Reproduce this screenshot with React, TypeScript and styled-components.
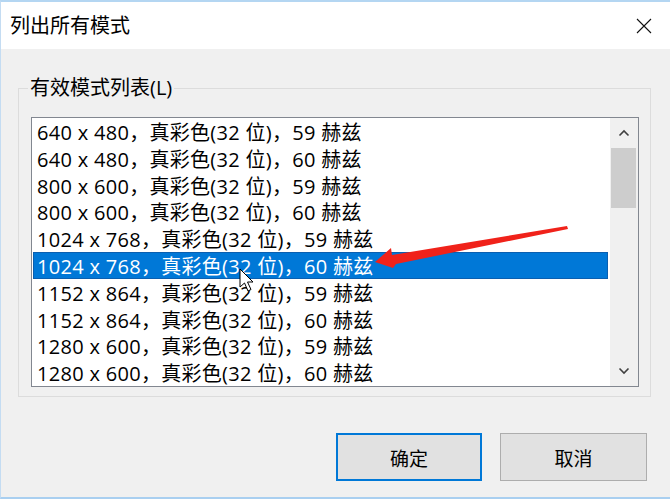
import React, { useState } from "react";
import styled, { createGlobalStyle } from "styled-components";

const GlobalStyle = createGlobalStyle`
  html, body {
    margin: 0;
    padding: 0;
    background: #f0f0f0;
  }
  body {
    font-family: "Open Sans", "Noto Sans CJK SC", sans-serif;
  }
`;

// 표시 모드 목록
const modes: string[] = [
  "640 x 480，真彩色(32 位)，59 赫兹",
  "640 x 480，真彩色(32 位)，60 赫兹",
  "800 x 600，真彩色(32 位)，59 赫兹",
  "800 x 600，真彩色(32 位)，60 赫兹",
  "1024 x 768，真彩色(32 位)，59 赫兹",
  "1024 x 768，真彩色(32 位)，60 赫兹",
  "1152 x 864，真彩色(32 位)，59 赫兹",
  "1152 x 864，真彩色(32 位)，60 赫兹",
  "1280 x 600，真彩色(32 位)，59 赫兹",
  "1280 x 600，真彩色(32 位)，60 赫兹",
];

const Window = styled.div`
  position: relative;
  width: 670px;
  height: 499px;
  box-sizing: border-box;
  border-top: 2px solid #b4d6f2;
  border-bottom: 2px solid #a9cff0;
  border-left: 1px solid #c4dcf2;
  display: flex;
  flex-direction: column;
  background: #f0f0f0;
  overflow: hidden;
`;

const TitleBar = styled.div`
  height: 47px;
  background: #fff;
  display: flex;
  align-items: center;
  justify-content: space-between;
  padding: 0 18px 0 9px;
  flex-shrink: 0;
`;

const Title = styled.span`
  font-size: 20px;
  color: #000;
  line-height: 1;
`;

const CloseBtn = styled.div`
  width: 16px;
  height: 16px;
  display: flex;
  align-items: center;
  justify-content: center;
`;

const Body = styled.div`
  flex: 1;
  display: flex;
  flex-direction: column;
  padding: 29px 19px 0 17px;
`;

const Group = styled.fieldset`
  margin: 0;
  padding: 0 11px 9px 12px;
  border: 1px solid #dcdcdc;
`;

const Legend = styled.legend`
  font-size: 20px;
  line-height: 20px;
  padding: 0 2px;
  margin-left: -3px;
  color: #000;
`;

const ListBox = styled.div`
  margin-top: 19px;
  height: 268px;
  border: 1px solid #828790;
  background: #fff;
  display: flex;
`;

const Rows = styled.div`
  flex: 1;
  display: flex;
  flex-direction: column;
  padding: 0 2px 0 1px;
`;

const Row = styled.div<{ $selected?: boolean }>`
  box-sizing: border-box;
  height: 26.8px;
  padding: 4px 0 0 4px;
  line-height: 22.8px;
  font-size: 20px;
  letter-spacing: 0.3px;
  white-space: nowrap;
  color: ${(p) => (p.$selected ? "#fff" : "#000")};
  background: ${(p) => (p.$selected ? "#0078d7" : "transparent")};
  box-shadow: ${(p) => (p.$selected ? "inset 0 0 0 1px #0a5fb0" : "none")};
`;

const ScrollBar = styled.div`
  width: 28px;
  background: #f0f0f0;
  display: flex;
  flex-direction: column;
`;

const ScrollArrow = styled.div`
  height: 30px;
  display: flex;
  align-items: center;
  justify-content: center;
`;

const Thumb = styled.div`
  height: 60px;
  margin: 0 2px 0 1px;
  background: #cdcdcd;
`;

const Track = styled.div`
  flex: 1;
`;

const Buttons = styled.div`
  display: flex;
  justify-content: flex-end;
  gap: 18px;
  margin-top: 36px;
  margin-right: 4px;
`;

const Button = styled.button<{ $default?: boolean }>`
  width: ${(p) => (p.$default ? "146px" : "147px")};
  height: 48px;
  box-sizing: border-box;
  background: #e1e1e1;
  border: ${(p) => (p.$default ? "2px solid #0078d7" : "1px solid #adadad")};
  font-family: "Noto Sans CJK SC", sans-serif;
  font-size: 19px;
  color: #000;
  padding: 0;
`;

const Overlay = styled.svg`
  position: absolute;
  left: -1px;
  top: -2px;
  pointer-events: none;
`;

const Chevron: React.FC<{ up?: boolean }> = ({ up }) => (
  <svg width="12" height="8" viewBox="0 0 12 8">
    <path
      d={up ? "M1.5 6.5 L6 2 L10.5 6.5" : "M1.5 1.5 L6 6 L10.5 1.5"}
      fill="none"
      stroke="#404040"
      strokeWidth="1.6"
    />
  </svg>
);

const App: React.FC = () => {
  const [selected, setSelected] = useState<number>(5);

  return (
    <Window>
      <GlobalStyle />
      <TitleBar>
        <Title>列出所有模式</Title>
        <CloseBtn>
          <svg width="16" height="16" viewBox="0 0 16 16">
            <path d="M1 1 L15 15 M15 1 L1 15" stroke="#111" strokeWidth="1.1" />
          </svg>
        </CloseBtn>
      </TitleBar>
      <Body>
        <Group>
          <Legend>有效模式列表(L)</Legend>
          <ListBox>
            <Rows>
              {modes.map((m, i) => (
                <Row key={i} $selected={i === selected} onClick={() => setSelected(i)}>
                  {m}
                </Row>
              ))}
            </Rows>
            <ScrollBar>
              <ScrollArrow>
                <Chevron up />
              </ScrollArrow>
              <Thumb />
              <Track />
              <ScrollArrow>
                <Chevron />
              </ScrollArrow>
            </ScrollBar>
          </ListBox>
        </Group>
        <Buttons>
          <Button $default>确定</Button>
          <Button>取消</Button>
        </Buttons>
      </Body>
      {/* 빨간 화살표 + 마우스 커서 (주석용 오버레이) */}
      <Overlay width="670" height="499" viewBox="0 0 670 499">
        <polygon
          points="375,262 391,248 392,255 567,226 568,229 396,264 393,268"
          fill="#f0221a"
        />
        <path
          d="M240 269 L240 287 L244.5 283 L248 291 L251 289.5 L247.5 282 L253 282 Z"
          fill="#fff"
          stroke="#000"
          strokeWidth="1"
          strokeLinejoin="round"
        />
      </Overlay>
    </Window>
  );
};

export default App;
